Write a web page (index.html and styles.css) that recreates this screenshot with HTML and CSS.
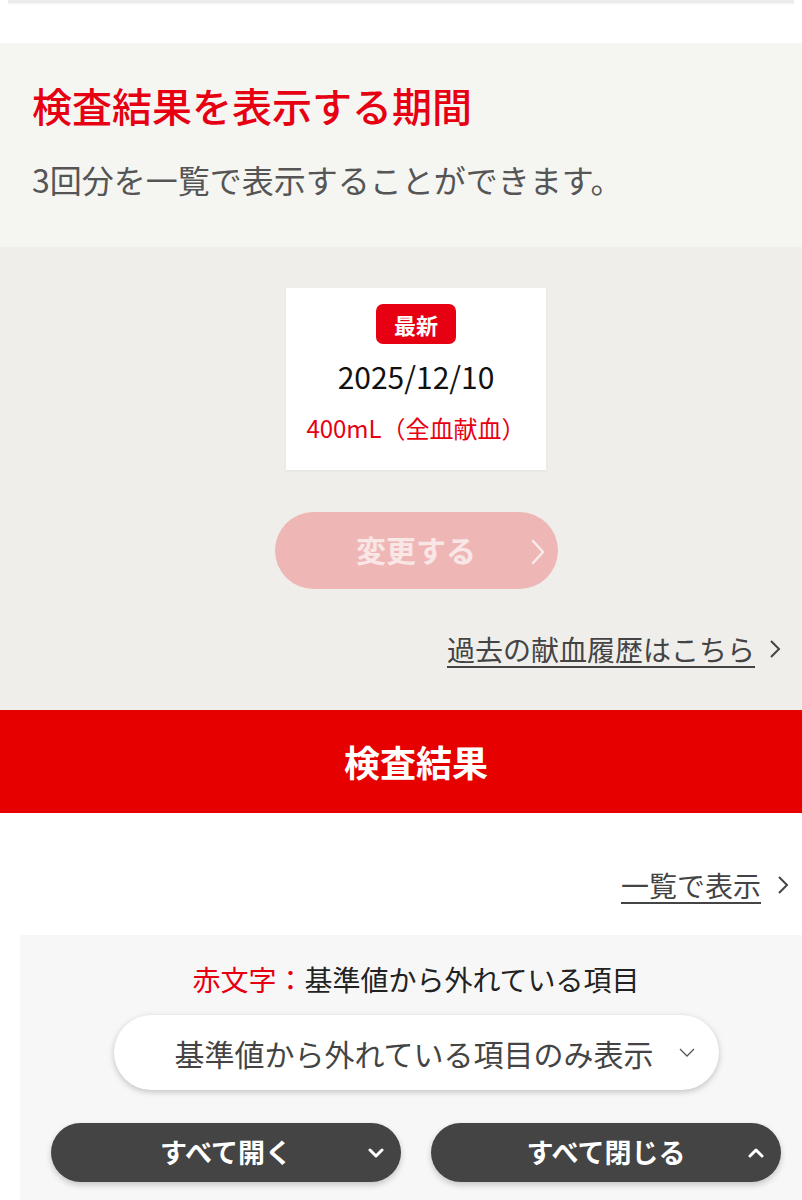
FILE: index.html
```html
<!doctype html>
<html lang="ja">
<head>
<meta charset="utf-8">
<title>検査結果</title>
<link rel="stylesheet" href="styles.css">
</head>
<body>

<div class="top-edge"></div>

<section class="period">
	<h2 class="period__title">検査結果を表示する期間</h2>
	<p class="period__note">3回分を一覧で表示することができます。</p>
</section>

<section class="history">
	<div class="history__card">
		<span class="badge">最新</span>
		<div class="history__date">2025/12/10</div>
		<div class="history__kind">400mL（全血献血）</div>
	</div>

	<button type="button" class="change-btn" disabled>
		変更する
		<svg class="change-btn__arrow" width="16" height="26" viewBox="0 0 16 26"><path d="M3 2l10 11L3 24" fill="none" stroke="currentColor" stroke-width="2.6" stroke-linecap="round" stroke-linejoin="round"/></svg>
	</button>

	<div class="more-link more-link--history">
		<a href="#">過去の献血履歴はこちら</a>
		<svg width="12" height="20" viewBox="0 0 12 20"><path d="M2 2l8 8-8 8" fill="none" stroke="currentColor" stroke-width="2"/></svg>
	</div>
</section>

<h2 class="results-bar">検査結果</h2>

<section class="results">
	<div class="more-link more-link--list">
		<a href="#">一覧で表示</a>
		<svg width="12" height="20" viewBox="0 0 12 20"><path d="M2 2l8 8-8 8" fill="none" stroke="currentColor" stroke-width="2"/></svg>
	</div>

	<div class="filter">
		<p class="filter__legend"><span class="red">赤文字：</span>基準値から外れている項目</p>

		<div class="select">
			<span>基準値から外れている項目のみ表示</span>
			<svg class="select__arrow" width="16" height="10" viewBox="0 0 16 10"><path d="M1 1l7 7 7-7" fill="none" stroke="#555" stroke-width="1.3"/></svg>
		</div>

		<div class="toggles">
			<button type="button" class="toggle">
				すべて開く
				<svg class="toggle__arrow" width="16" height="12" viewBox="0 0 16 12"><path d="M2 3l6 6 6-6" fill="none" stroke="#fff" stroke-width="3" stroke-linecap="round" stroke-linejoin="round"/></svg>
			</button>
			<button type="button" class="toggle">
				すべて閉じる
				<svg class="toggle__arrow" width="16" height="12" viewBox="0 0 16 12"><path d="M2 9l6-6 6 6" fill="none" stroke="#fff" stroke-width="3" stroke-linecap="round" stroke-linejoin="round"/></svg>
			</button>
		</div>
	</div>
</section>

</body>
</html>
```

FILE: styles.css
```css
html, body {
	margin: 0;
	padding: 0;
	background: #fff;
	font-family: "Noto Sans CJK JP", "Noto Sans", sans-serif;
	color: #333;
	overflow-x: hidden;
}

h2, p {
	margin: 0;
}

.top-edge {
	height: 3px;
	margin: 0 8px;
	background: #ececec;
	box-shadow: 0 1px 2px rgba(0, 0, 0, 0.05);
}

.period {
	margin-top: 40px;
	padding: 39px 32px 0;
	height: 165px;
	background: #f5f5f2;
}

.period__title {
	font-size: 40px;
	font-weight: 500;
	line-height: 46px;
	color: #e60012;
}

.period__note {
	margin-top: 31px;
	font-size: 32px;
	line-height: 40px;
	color: #555;
}

.history {
	display: flex;
	flex-direction: column;
	align-items: center;
	padding: 41px 0 0 30px;
	height: 422px;
	background: #efeeeb;
}

.history__card {
	display: flex;
	flex-direction: column;
	align-items: center;
	width: 260px;
	height: 182px;
	box-sizing: border-box;
	padding-top: 16px;
	background: #fff;
	box-shadow: 0 1px 3px rgba(0, 0, 0, 0.05);
}

.badge {
	display: block;
	width: 80px;
	height: 40px;
	line-height: 40px;
	text-align: center;
	border-radius: 7px;
	background: #e60012;
	color: #fff;
	font-size: 22px;
	font-weight: bold;
}

.history__date {
	margin-top: 14px;
	font-size: 30px;
	line-height: 36px;
	color: #111;
}

.history__kind {
	margin-top: 19px;
	font-size: 24px;
	line-height: 30px;
	color: #e60012;
}

.change-btn {
	position: relative;
	margin-top: 42px;
	width: 283px;
	height: 77px;
	border: 0;
	border-radius: 39px;
	background: #efb6b6;
	color: #f9e6e6;
	font-family: inherit;
	font-size: 30px;
	font-weight: bold;
	padding: 0 0 4px;
}

.change-btn__arrow {
	position: absolute;
	right: 12px;
	top: 27px;
	color: #fbeaea;
}

.more-link {
	display: flex;
	align-items: center;
	gap: 14px;
	align-self: flex-end;
	color: #444;
}

.more-link a {
	color: #444;
	font-size: 28px;
	line-height: 36px;
	text-decoration: underline;
	text-underline-offset: 5px;
	text-decoration-thickness: 2px;
}

.more-link--history {
	margin-top: 42px;
	margin-right: 21px;
}

.results-bar {
	height: 103px;
	line-height: 103px;
	padding-left: 30px;
	text-align: center;
	background: #e60000;
	color: #fff;
	font-size: 36px;
	font-weight: bold;
}

.results {
	display: flex;
	flex-direction: column;
}

.more-link--list {
	margin: 54px 13px 0 0;
	gap: 16px;
}

.filter {
	display: flex;
	flex-direction: column;
	align-items: center;
	margin: 32px 0 0 20px;
	padding: 24px 21px 40px 31px;
	background: #f7f7f7;
}

.filter__legend {
	font-size: 28px;
	line-height: 40px;
	color: #222;
}

.red {
	color: #e60012;
}

.select {
	position: relative;
	display: flex;
	align-items: center;
	margin-top: 16px;
	width: 605px;
	height: 75px;
	box-sizing: border-box;
	padding-left: 61px;
	border-radius: 38px;
	background: #fff;
	box-shadow: 0 2px 6px rgba(0, 0, 0, 0.22);
	font-size: 30px;
	color: #444;
}

.select__arrow {
	position: absolute;
	right: 24px;
	top: 33px;
}

.toggles {
	display: flex;
	gap: 30px;
	margin-top: 33px;
}

.toggle {
	position: relative;
	width: 350px;
	height: 59px;
	border: 0;
	border-radius: 30px;
	background: #444;
	color: #fff;
	font-family: inherit;
	font-size: 27px;
	font-weight: bold;
	padding: 0 0 3px;
	box-shadow: 0 3px 6px rgba(0, 0, 0, 0.2);
}

.toggle__arrow {
	position: absolute;
	right: 17px;
	top: 24px;
}
```
